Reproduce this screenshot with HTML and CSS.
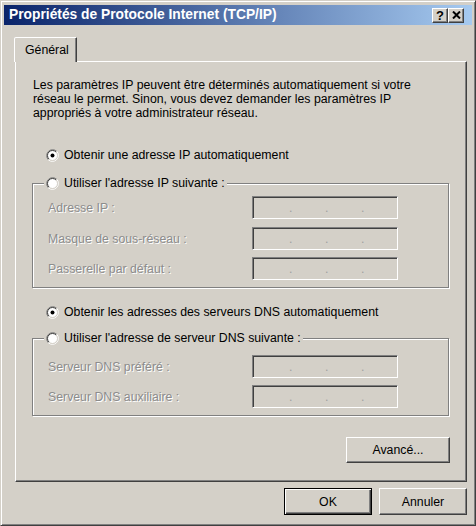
FILE: index.html
```html
<!DOCTYPE html>
<html lang="fr">
<head>
<meta charset="utf-8">
<title>Propriétés de Protocole Internet (TCP/IP)</title>
<link rel="stylesheet" href="styles.css">
</head>
<body>
<div class="window">
  <div class="titlebar">
    <span class="title">Propriétés de Protocole Internet (TCP/IP)</span>
    <div class="tb-buttons">
      <span class="tb-btn help">?</span>
      <span class="tb-btn close"><svg width="9" height="8" viewBox="0 0 9 8"><path d="M1 0.5l7 7M8 0.5l-7 7" stroke="#000" stroke-width="2" fill="none"/></svg></span>
    </div>
  </div>
  <div class="tabs"><div class="tab">Général</div></div>
  <div class="panel">
    <p class="intro">Les paramètres IP peuvent être déterminés automatiquement si votre<br>réseau le permet. Sinon, vous devez demander les paramètres IP<br>appropriés à votre administrateur réseau.</p>

    <div class="radio r-ip">
      <svg viewBox="0 0 13 13"><circle cx="6.5" cy="6.5" r="5" fill="#fff"/><path d="M2.26 10.74A6 6 0 0 1 10.74 2.26" stroke="#808080" fill="none"/><path d="M10.74 2.26A6 6 0 0 1 2.26 10.74" stroke="#fff" fill="none"/><path d="M2.96 10.04A5 5 0 0 1 10.04 2.96" stroke="#404040" fill="none"/><path d="M10.04 2.96A5 5 0 0 1 2.96 10.04" stroke="#d4d0c8" fill="none"/><circle cx="6.5" cy="6.5" r="2" fill="#000"/></svg>
      <span>Obtenir une adresse IP automatiquement</span>
    </div>

    <fieldset class="group g1">
      <legend>
        <span class="radio">
          <svg viewBox="0 0 13 13"><circle cx="6.5" cy="6.5" r="5" fill="#fff"/><path d="M2.26 10.74A6 6 0 0 1 10.74 2.26" stroke="#808080" fill="none"/><path d="M10.74 2.26A6 6 0 0 1 2.26 10.74" stroke="#fff" fill="none"/><path d="M2.96 10.04A5 5 0 0 1 10.04 2.96" stroke="#404040" fill="none"/><path d="M10.04 2.96A5 5 0 0 1 2.96 10.04" stroke="#d4d0c8" fill="none"/></svg>
          <span>Utiliser l'adresse IP suivante :</span>
        </span>
      </legend>
      <div class="field"><span class="lbl">Adresse IP :</span><span class="ip"><span>.</span><span>.</span><span>.</span></span></div>
      <div class="field"><span class="lbl">Masque de sous-réseau :</span><span class="ip"><span>.</span><span>.</span><span>.</span></span></div>
      <div class="field"><span class="lbl">Passerelle par défaut :</span><span class="ip"><span>.</span><span>.</span><span>.</span></span></div>
    </fieldset>

    <div class="radio r-dns">
      <svg viewBox="0 0 13 13"><circle cx="6.5" cy="6.5" r="5" fill="#fff"/><path d="M2.26 10.74A6 6 0 0 1 10.74 2.26" stroke="#808080" fill="none"/><path d="M10.74 2.26A6 6 0 0 1 2.26 10.74" stroke="#fff" fill="none"/><path d="M2.96 10.04A5 5 0 0 1 10.04 2.96" stroke="#404040" fill="none"/><path d="M10.04 2.96A5 5 0 0 1 2.96 10.04" stroke="#d4d0c8" fill="none"/><circle cx="6.5" cy="6.5" r="2" fill="#000"/></svg>
      <span>Obtenir les adresses des serveurs DNS automatiquement</span>
    </div>

    <fieldset class="group g2">
      <legend>
        <span class="radio">
          <svg viewBox="0 0 13 13"><circle cx="6.5" cy="6.5" r="5" fill="#fff"/><path d="M2.26 10.74A6 6 0 0 1 10.74 2.26" stroke="#808080" fill="none"/><path d="M10.74 2.26A6 6 0 0 1 2.26 10.74" stroke="#fff" fill="none"/><path d="M2.96 10.04A5 5 0 0 1 10.04 2.96" stroke="#404040" fill="none"/><path d="M10.04 2.96A5 5 0 0 1 2.96 10.04" stroke="#d4d0c8" fill="none"/></svg>
          <span>Utiliser l'adresse de serveur DNS suivante :</span>
        </span>
      </legend>
      <div class="field"><span class="lbl">Serveur DNS préféré :</span><span class="ip"><span>.</span><span>.</span><span>.</span></span></div>
      <div class="field"><span class="lbl">Serveur DNS auxiliaire :</span><span class="ip"><span>.</span><span>.</span><span>.</span></span></div>
    </fieldset>

    <div class="adv-row"><button class="btn adv">Avancé...</button></div>
  </div>
  <div class="footer">
    <button class="btn default">OK</button>
    <button class="btn">Annuler</button>
  </div>
</div>
</body>
</html>
```
FILE: styles.css
```css
* { box-sizing: border-box; }
html, body { margin: 0; padding: 0; }
body {
  width: 476px;
  height: 526px;
  overflow: hidden;
  background: #d4d0c8;
  font-family: "Liberation Sans", Arial, sans-serif;
  font-size: 12.3px;
  color: #000;
}
.window {
  width: 476px;
  height: 526px;
  background: #d4d0c8;
  border: 1px solid;
  border-color: #d4d0c8 #404040 #404040 #d4d0c8;
  box-shadow: inset 1px 1px #fff, inset -1px -1px #808080;
  padding: 3px;
  display: flex;
  flex-direction: column;
}
.titlebar {
  margin-top: 1px;
  height: 20px;
  flex: none;
  background: linear-gradient(to right, #0a246a, #a6caf0);
  display: flex;
  align-items: center;
  padding: 0 8px 0 5px;
}
.title {
  flex: 1;
  color: #fff;
  font-family: "Liberation Sans", Arial, sans-serif;
  font-weight: bold;
  font-size: 13.8px;
  line-height: 20px;
  white-space: nowrap;
}
.tb-buttons { display: flex; }
.tb-btn {
  width: 16px;
  height: 15px;
  background: #d4d0c8;
  border: 1px solid;
  border-color: #fff #404040 #404040 #fff;
  box-shadow: inset -1px -1px #808080;
  display: flex;
  align-items: center;
  justify-content: center;
  font-family: "Liberation Sans", Arial, sans-serif;
  font-weight: bold;
  font-size: 13px;
  line-height: 1;
}
.tabs {
  margin: 12px 0 -1px 10px;
  display: flex;
  position: relative;
  z-index: 1;
}
.tab {
  width: 63px;
  height: 25px;
  padding: 5px 0 0 10px;
  line-height: 14px;
  background: #d4d0c8;
  border: 1px solid;
  border-bottom: 0;
  border-color: #fff #404040 transparent #fff;
  box-shadow: inset -1px 0 #808080;
  border-top-left-radius: 2px;
  border-top-right-radius: 1px;
}
.panel {
  margin: 0 5px 0 11px;
  border: 1px solid;
  border-color: #fff #404040 #404040 #fff;
  box-shadow: inset -1px -1px #808080;
  padding: 16px 17px 18px 16px;
  display: flex;
  flex-direction: column;
}
.intro {
  margin: 0 0 0 1px;
  line-height: 14px;
  white-space: nowrap;
}
.radio {
  display: flex;
  align-items: center;
  gap: 5px;
  height: 14px;
  line-height: 14px;
  white-space: nowrap;
}
.radio svg { flex: none; width: 13px; height: 13px; }
.r-ip { margin: 28px 0 0 14px; }
.r-dns { margin: 17px 0 0 14px; }
.group {
  margin: 0;
  min-width: 0;
  border: 1px solid #808080;
  box-shadow: inset 1px 1px #fff, 1px 1px #fff;
  padding: 6px 0 7px 15px;
}
.g1 { margin-top: 14px; }
.g2 { margin-top: 12px; padding-top: 10px; }
.group legend {
  padding: 0 2px;
  margin-left: -4px;
  background: #d4d0c8;
}
.field {
  display: flex;
  align-items: center;
  height: 23px;
}
.field + .field { margin-top: 7px; }
.g1 .field:nth-of-type(2) { margin-top: 8px; }
.lbl {
  width: 204px;
  color: #8c8c8c;
  text-shadow: 1px 1px #fff;
  white-space: nowrap;
}
.ip {
  width: 146px;
  height: 23px;
  border: 1px solid;
  border-color: #808080 #fff #fff #808080;
  box-shadow: inset 1px 1px #404040, inset -1px -1px #d4d0c8;
  background: #d4d0c8;
  display: flex;
  align-items: center;
  padding-left: 36px;
  color: #a0a0a0;
}
.ip span { width: 36px; }
.adv-row {
  display: flex;
  justify-content: flex-end;
  margin: 21px -1px 0 0;
}
.btn {
  font-family: "Liberation Sans", Arial, sans-serif;
  font-size: 12.3px;
  color: #000;
  background: #d4d0c8;
  border: 1px solid;
  border-color: #fff #404040 #404040 #fff;
  box-shadow: inset -1px -1px #808080;
  padding: 0;
  margin: 0;
}
.adv { width: 104px; height: 26px; }
.footer {
  display: flex;
  justify-content: flex-end;
  gap: 7px;
  margin-top: 6px;
  padding-right: 5px;
}
.footer .btn { width: 88px; height: 27px; }
.btn.default {
  border: 1px solid #000;
  box-shadow: inset 1px 1px #fff, inset -1px -1px #404040, inset -2px -2px #808080;
}
```
